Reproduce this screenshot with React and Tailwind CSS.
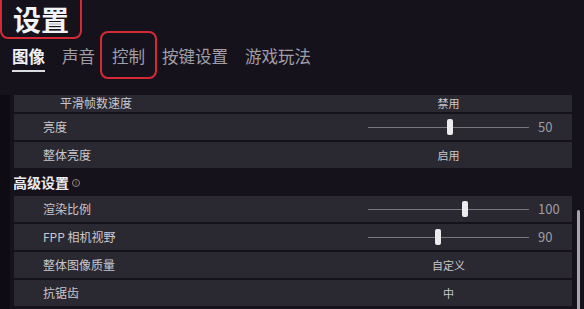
import React from "react";

const FONT = { fontFamily: '"Noto Sans CJK SC", "Noto Sans", sans-serif' };

const rowsTop = [
  { label: "平滑帧数速度", text: "禁用", indent: true },
  { label: "亮度", slider: 79, value: "50" },
  { label: "整体亮度", text: "启用" },
];

const rowsBottom = [
  { label: "渲染比例", slider: 94, value: "100" },
  { label: "FPP 相机视野", slider: 67, value: "90" },
  { label: "整体图像质量", text: "自定义" },
  { label: "抗锯齿", text: "中" },
];

function Row({ row }) {
  return (
    <div
      className={
        "flex bg-[#2a2830] shrink-0 " +
        (row.indent ? "h-[17px] items-start" : "h-[26px] items-center")
      }
    >
      <div
        className={
          "flex-1 text-[12px] leading-[14px] text-[#c9c7cd] " +
          (row.indent ? "pl-[46px] pt-[1px]" : "pl-[29px]")
        }
      >
        {row.label}
      </div>
      <div
        className={
          "w-[161px] flex justify-center " +
          (row.indent ? "items-start pt-[1px]" : "items-center")
        }
      >
        {row.slider !== undefined ? (
          <div className="relative w-full h-[16px] flex items-center">
            <div className="w-full h-px bg-[#77757d]" />
            {/* thumb */}
            <div
              className="absolute top-0 w-[6px] h-[16px] rounded-[2px] bg-[#ecebee]"
              style={{ left: row.slider }}
            />
          </div>
        ) : (
          <span className="text-[11px] leading-[14px] text-[#c9c7cd]">
            {row.text}
          </span>
        )}
      </div>
      <div className="w-[43px] pl-[9px] text-[13px] text-[#9f9da5]">
        {row.value}
      </div>
    </div>
  );
}

export default function App() {
  const tabs = ["图像", "声音", "控制", "按键设置", "游戏玩法"];

  return (
    <div
      className="w-[584px] h-[309px] bg-[#16121c] overflow-hidden flex flex-col"
      style={FONT}
    >
      {/* title */}
      <div className="h-[40px] shrink-0">
        <div className="w-[82px] h-[46px] -mt-[7px] border-2 border-[#d42a35] rounded-lg flex items-end pl-[11px]">
          <span className="text-[28px] leading-[36px] font-bold text-[#f3f2f5]">
            设置
          </span>
        </div>
      </div>

      {/* tabs */}
      <div className="h-[55px] shrink-0 flex items-start pl-[12px] gap-[17px] pt-[5px]">
        {tabs.map((t, i) => (
          <div key={t} className="relative flex flex-col">
            <span
              className={
                "text-[16.5px] leading-[22px] " +
                (i === 0 ? "text-[#f1f0f3] font-bold" : "text-[#a09ea6]")
              }
            >
              {t}
            </span>
            {i === 0 && (
              <div className="mt-[3px] h-[2px] bg-[#dcdbe0]" />
            )}
            {t === "控制" && (
              <div className="absolute -left-[12px] -right-[12px] -top-[14px] -bottom-[12px] border-2 border-[#d42a35] rounded-lg" />
            )}
          </div>
        ))}
      </div>

      {/* list */}
      <div className="flex flex-1 min-h-0 overflow-hidden">
        <div className="w-[10px] bg-[#0e0b12] shrink-0" />
        <div className="w-[4px] shrink-0" />
        <div className="w-[558px] flex flex-col gap-[2px] overflow-hidden">
          {rowsTop.map((r) => (
            <Row key={r.label} row={r} />
          ))}
          <div className="h-[24px] shrink-0 flex items-center -ml-[1px] gap-[3px]">
            <span className="text-[14px] font-bold text-[#ecebee]">
              高级设置
            </span>
            <span className="w-[8px] h-[8px] rounded-full border border-[#8e8c94] text-[6px] leading-[6px] text-[#8e8c94] flex items-center justify-center mt-[2px]">
              i
            </span>
          </div>
          {rowsBottom.map((r) => (
            <Row key={r.label} row={r} />
          ))}
        </div>
        <div className="w-[12px] shrink-0">
          <div className="ml-[5px] mt-[115px] w-[3px] h-[120px] bg-[#a7a5ad] rounded-sm" />
        </div>
      </div>
    </div>
  );
}
